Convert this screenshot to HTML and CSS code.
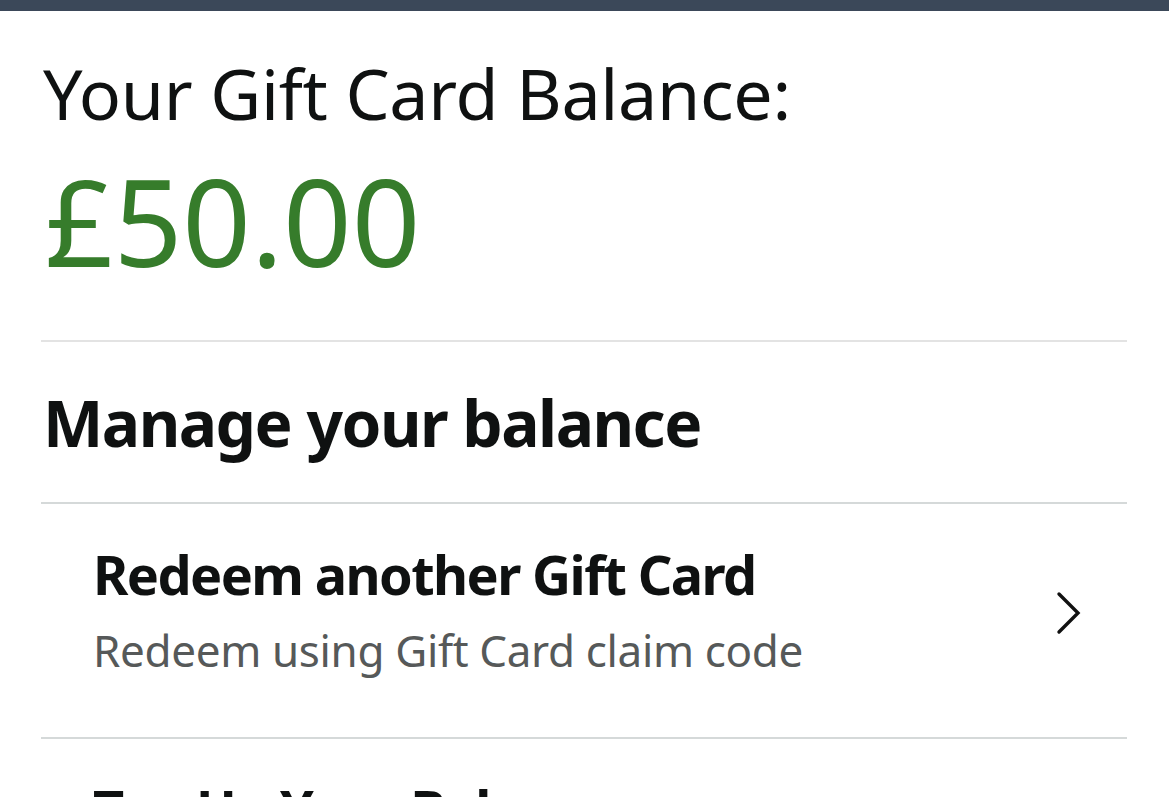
FILE: index.html
```html
<!DOCTYPE html>
<html lang="en">
<head>
    <meta charset="UTF-8">
    <meta name="viewport" content="width=device-width, initial-scale=1.0">
    <title>Gift Card Balance</title>
    <link rel="stylesheet" href="styles.css">
</head>
<body>
    <div class="top-bar"></div>
    <main class="page">
        <h1 class="balance-label">Your Gift Card Balance:</h1>
        <div class="balance-amount">£50.00</div>

        <h2 class="section-title">Manage your balance</h2>

        <ul class="option-list">
            <li class="option">
                <div class="option-text">
                    <div class="option-title">Redeem another Gift Card</div>
                    <div class="option-sub">Redeem using Gift Card claim code</div>
                </div>
                <svg class="chevron" width="28" height="44" viewBox="0 0 28 44">
                    <path d="M4 3 L23 22 L4 41" fill="none" stroke="#111" stroke-width="3.4" stroke-linecap="round" stroke-linejoin="miter"/>
                </svg>
            </li>
            <li class="option">
                <div class="option-text">
                    <div class="option-title">Top Up Your Balance</div>
                    <div class="option-sub">Add money to your Gift Card balance</div>
                </div>
            </li>
        </ul>
    </main>
</body>
</html>
```

FILE: styles.css
```css
* {
    margin: 0;
    padding: 0;
    box-sizing: border-box;
}

body {
    background: #fff;
    color: #0f1111;
    font-family: "Noto Sans", "Open Sans", sans-serif;
    overflow: hidden;
}

.top-bar {
    height: 11px;
    background: #3b4859;
}

.page {
    padding: 0 42px 0 41px;
}

.balance-label {
    margin-top: 40px;
    font-size: 70px;
    font-weight: 400;
    line-height: 84px;
    letter-spacing: -0.3px;
    padding-left: 2px;
}

.balance-amount {
    margin-top: 16px;
    font-size: 120px;
    line-height: 140px;
    color: #367c2b;
    padding-left: 4px;
}

.section-title {
    margin-top: 49px;
    border-top: 2px solid #e3e3e3;
    padding-top: 41px;
    padding-bottom: 39px;
    padding-left: 2px;
    font-size: 64px;
    font-weight: 700;
    line-height: 80px;
    letter-spacing: -1.5px;
}

.option-list {
    list-style: none;
}

.option {
    display: flex;
    align-items: center;
    justify-content: space-between;
    border-top: 2px solid #d5d9d9;
    padding: 37px 44px 59px 52px;
}

.option-title {
    font-size: 54px;
    font-weight: 700;
    line-height: 66px;
    letter-spacing: -1.6px;
}

.option-sub {
    margin-top: 15px;
    font-size: 44px;
    line-height: 56px;
    letter-spacing: -0.35px;
    color: #565959;
}

.chevron {
    display: block;
    margin-top: 6px;
}
```
